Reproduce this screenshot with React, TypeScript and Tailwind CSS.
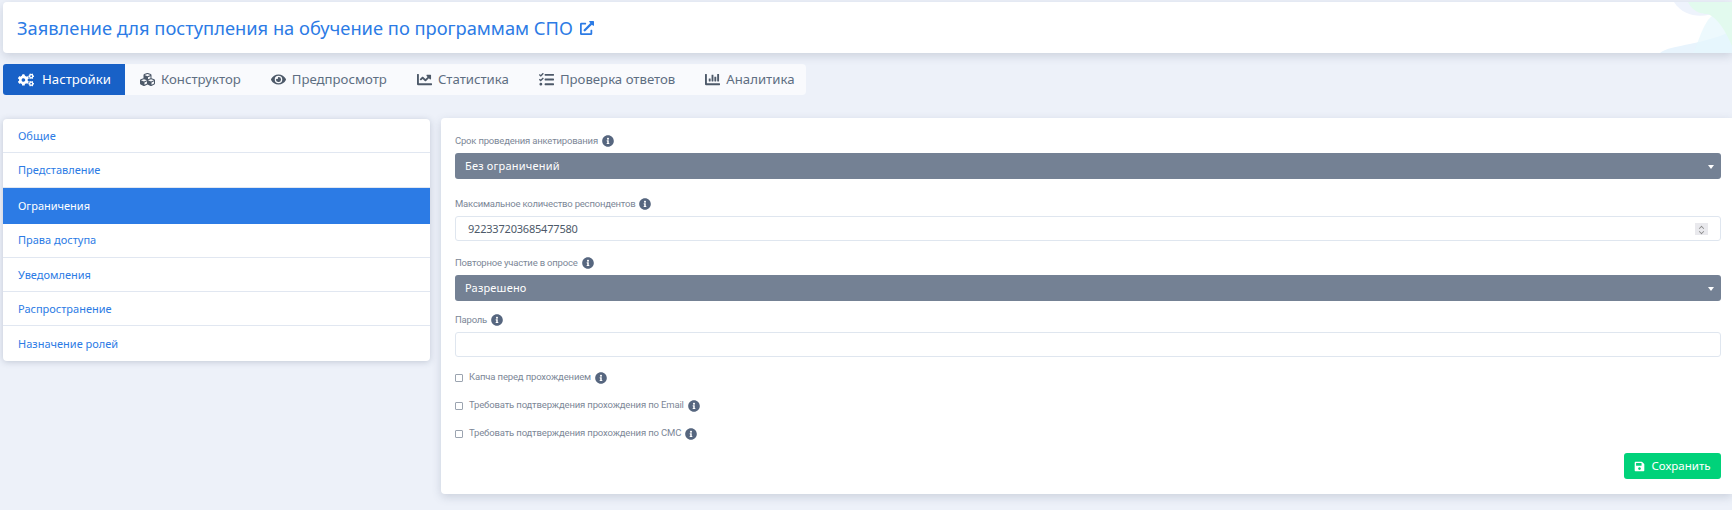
import { FaChartBar, FaChartLine, FaCogs, FaCubes, FaExternalLinkAlt, FaEye, FaInfoCircle, FaSave, FaTasks } from "react-icons/fa";

const tabs = [
    { label: "Настройки", icon: FaCogs, active: true },
    { label: "Конструктор", icon: FaCubes },
    { label: "Предпросмотр", icon: FaEye },
    { label: "Статистика", icon: FaChartLine },
    { label: "Проверка ответов", icon: FaTasks },
    { label: "Аналитика", icon: FaChartBar },
];

const menu = ["Общие", "Представление", "Ограничения", "Права доступа", "Уведомления", "Распространение", "Назначение ролей"];

function Info() {
    return <FaInfoCircle className="ml-[4px] shrink-0 text-[#56667f]" size={12} />;
}

function Label({ children }: { children: string }) {
    return (
        <div className="flex h-[25px] items-center pt-px font-['Roboto',sans-serif] text-[9.5px] tracking-[-0.2px] text-[#7c8797]">
            {children}
            <Info />
        </div>
    );
}

function SelectBox({ value }: { value: string }) {
    return (
        <div className="flex h-[26px] items-center justify-between rounded-[3px] bg-[#748194] pl-[10px] pr-[7px] pt-px text-[11px] tracking-[0.2px] text-white">
            {value}
            <span className="h-0 w-0 border-x-[3px] border-t-[4px] border-x-transparent border-t-white" />
        </div>
    );
}

function Check({ children }: { children: string }) {
    return (
        <div className="flex h-[28px] items-center pt-px font-['Roboto',sans-serif] text-[9.5px] tracking-[-0.15px] text-[#7c8797]">
            <span className="mr-[6px] h-[8px] w-[8px] rounded-[1px] border border-[#9ba4b0] bg-white" />
            {children}
            <Info />
        </div>
    );
}

export default function App() {
    return (
        <div className="min-h-[510px] bg-[#edf1f9] pl-[3px] pt-[2px] font-['Noto_Sans','Open_Sans',sans-serif]">
            <div className="relative flex h-[51px] items-center overflow-hidden rounded-l-[4px] bg-white pl-[14px] pt-px shadow-[0_3px_10px_rgba(65,80,110,0.2)]">
                <span className="text-[18.3px] text-[#2c7be5]">Заявление для поступления на обучение по программам СПО</span>
                <FaExternalLinkAlt className="ml-[7px] text-[#2c7be5]" size={14} />
                <svg className="absolute right-0 top-0" width="72" height="51" viewBox="0 0 72 51">
                    <path d="M0 51C8 44 30 44 60 34L72 29V51Z" fill="#e8f4fd" />
                    <path d="M33 51C38 42 40 30 48 18C56 10 66 2 72 20V51Z" fill="#e5f7fc" opacity="0.7" />
                    <path d="M14 0C24 16 44 16 58 10L68 0Z" fill="#eef3fc" />
                    <path d="M28 0C34 12 44 12 48 12C58 16 66 30 72 44V0Z" fill="#e2faee" />
                </svg>
            </div>

            <div className="mt-[11px] flex h-[31px] w-[803px] rounded-[4px] bg-[#f9fafd]">
                {tabs.map(({ label, icon: Icon, active }) => (
                    <div
                        key={label}
                        className={
                            active
                                ? "flex items-center gap-[8px] whitespace-nowrap rounded-l-[3px] bg-[#1861c7] pl-[15px] pr-[14px] text-[13.2px] text-white"
                                : "flex items-center gap-[6px] whitespace-nowrap px-[15px] text-[13.2px] text-[#5e6e82]"
                        }
                    >
                        <Icon size={active ? 16 : 15} className={active ? "text-white" : "text-[#4d5969]"} />
                        {label}
                    </div>
                ))}
            </div>

            <div className="mt-[24px] flex items-start gap-[11px]">
                <div className="w-[427px] overflow-hidden rounded-[4px] bg-white shadow-[0_1px_6px_rgba(65,80,110,0.25)]">
                    {menu.map((item, i) => (
                        <div
                            key={item}
                            className={
                                i === 2
                                    ? "flex h-[36px] items-center bg-[#2c7be5] pl-[15px] pt-px text-[11px] text-white"
                                    : "flex h-[34.3px] items-center border-b border-[#e1e7f1] pl-[15px] pt-px text-[11px] text-[#2c7be5] last:border-b-0"
                            }
                        >
                            {item}
                        </div>
                    ))}
                </div>

                <div className="-mt-px flex-1 rounded-l-[4px] bg-white pb-[15px] pl-[14px] pr-[11px] pt-[10px] shadow-[0_3px_10px_rgba(65,80,110,0.2)]">
                    <Label>Срок проведения анкетирования</Label>
                    <SelectBox value="Без ограничений" />
                    <div className="mt-[12px]">
                        <Label>Максимальное количество респондентов</Label>
                    </div>
                    <div className="flex h-[25px] items-center justify-between rounded-[3px] border border-[#dfe6ef] pl-[12px] pr-[12px] pt-px text-[11px] tracking-[-0.2px] text-[#4d5969]">
                        922337203685477580
                        <span className="flex h-[12px] w-[13px] flex-col items-center justify-center bg-[#e9e9ed]">
                            <span className="h-[5px] w-[5px] translate-y-[2px] rotate-45 scale-75 border-l border-t border-[#888]" />
                            <span className="h-[5px] w-[5px] -rotate-45 scale-75 border-b border-l border-[#888]" />
                        </span>
                    </div>
                    <div className="mt-[9px]">
                        <Label>Повторное участие в опросе</Label>
                    </div>
                    <SelectBox value="Разрешено" />
                    <div className="mt-[6px]">
                        <Label>Пароль</Label>
                    </div>
                    <div className="h-[25px] rounded-[3px] border border-[#dfe6ef]" />
                    <div className="mt-[6px]">
                        <Check>Капча перед прохождением</Check>
                        <Check>Требовать подтверждения прохождения по Email</Check>
                        <Check>Требовать подтверждения прохождения по СМС</Check>
                    </div>
                    <div className="mt-[6px] flex justify-end">
                        <button className="flex h-[26px] w-[97px] items-center justify-center gap-[6px] rounded-[3px] bg-[#00d27a] text-[11.5px] text-white">
                            <FaSave size={11} />
                            Сохранить
                        </button>
                    </div>
                </div>
            </div>
        </div>
    );
}
